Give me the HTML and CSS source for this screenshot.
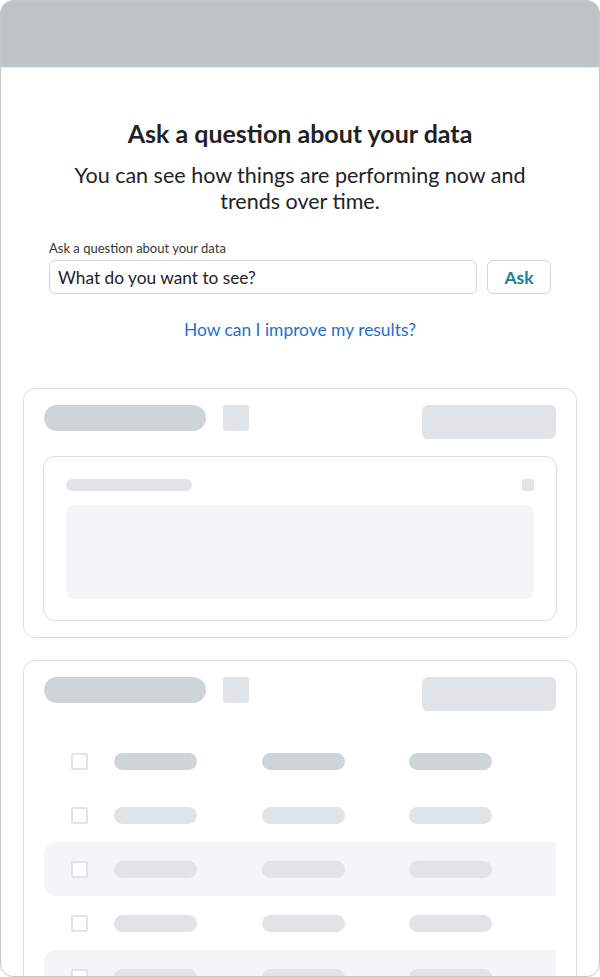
FILE: index.html
```html
<!DOCTYPE html>
<html lang="en">
<head>
<meta charset="utf-8">
<title>Ask a question about your data</title>
<link rel="stylesheet" href="styles.css">
</head>
<body>
<div class="frame">
  <div class="topbar"></div>
  <main class="main">
    <h1 class="title">Ask a question about your data</h1>
    <p class="subtitle">You can see how things are performing now and trends over time.</p>
    <form class="ask-form">
      <label class="label" for="q">Ask a question about your data</label>
      <div class="ask-row">
        <input id="q" class="input" type="text" placeholder="What do you want to see?">
        <button type="button" class="ask-btn">Ask</button>
      </div>
    </form>
    <a class="help-link" href="#">How can I improve my results?</a>

    <section class="card">
      <div class="card-head">
        <span class="sk-title"></span>
        <span class="sk-icon"></span>
        <span class="spacer"></span>
        <span class="sk-action"></span>
      </div>
      <div class="inner-card">
        <div class="inner-head">
          <span class="sk-line"></span>
          <span class="sk-dot"></span>
        </div>
        <div class="sk-chart"></div>
      </div>
    </section>

    <section class="card card-table">
      <div class="card-head">
        <span class="sk-title"></span>
        <span class="sk-icon"></span>
        <span class="spacer"></span>
        <span class="sk-action"></span>
      </div>
      <div class="table">
        <div class="row head"><span class="cb"></span><span class="cell"></span><span class="cell"></span><span class="cell"></span></div>
        <div class="row"><span class="cb"></span><span class="cell"></span><span class="cell"></span><span class="cell"></span></div>
        <div class="row striped"><span class="cb"></span><span class="cell"></span><span class="cell"></span><span class="cell"></span></div>
        <div class="row"><span class="cb"></span><span class="cell"></span><span class="cell"></span><span class="cell"></span></div>
        <div class="row striped"><span class="cb"></span><span class="cell"></span><span class="cell"></span><span class="cell"></span></div>
      </div>
    </section>
  </main>
</div>
</body>
</html>
```

FILE: styles.css
```css
* { box-sizing: border-box; }
html, body { margin: 0; padding: 0; background: #ffffff; }
body { font-family: Lato, "Open Sans", Arial, sans-serif; color: #1e2226; }

.frame {
  width: 600px;
  height: 977px;
  border: 1px solid #c3c7c9;
  border-radius: 13px;
  overflow: hidden;
  background: #fff;
}
.topbar {
  height: 67px;
  background: #bdc3c6;
  border-bottom: 1px solid #e6e8ea;
}
.main {
  padding: 50px 22px 0;
  display: flex;
  flex-direction: column;
  align-items: stretch;
}
.title {
  margin: 0;
  font-size: 25px;
  line-height: 30px;
  font-weight: 700;
  text-align: center;
  color: #1e2226;
}
.subtitle {
  margin: 14px auto 0;
  max-width: 480px;
  font-size: 21.5px;
  line-height: 26px;
  text-align: center;
  color: #1e2226;
}
.ask-form {
  width: 502px;
  margin: 26px auto 0;
  display: flex;
  flex-direction: column;
}
.label {
  font-size: 13px;
  line-height: 16px;
  color: #33383c;
  margin-bottom: 4px;
}
.ask-row {
  display: flex;
  gap: 10px;
}
.input {
  flex: 1;
  height: 34px;
  border: 1px solid #d3d7d9;
  border-radius: 6px;
  padding: 0 8px;
  font-family: inherit;
  font-size: 17.3px;
  color: #1e2226;
  outline: none;
}
.input::placeholder { color: #1e2226; opacity: 1; }
.ask-btn {
  width: 64px;
  height: 34px;
  border: 1px solid #d3d7d9;
  border-radius: 6px;
  background: #fff;
  font-family: inherit;
  font-size: 17.5px;
  font-weight: 700;
  color: #177f9b;
  padding: 0;
}
.help-link {
  margin: 25px auto 0;
  font-size: 17.4px;
  line-height: 22px;
  color: #1f6fd1;
  text-decoration: none;
}

.card {
  margin-top: 47px;
  border: 1px solid #dcdee2;
  border-radius: 12px;
  padding: 16px 20px 16px;
}
.card-table {
  margin-top: 22px;
  padding-bottom: 0;
}
.card-head {
  display: flex;
  align-items: flex-start;
}
.sk-title {
  width: 162px;
  height: 26px;
  border-radius: 13px;
  background: #cfd4d6;
}
.sk-icon {
  width: 26px;
  height: 26px;
  margin-left: 17px;
  border-radius: 2px;
  background: #e1e4e6;
}
.spacer { flex: 1; }
.sk-action {
  width: 134px;
  height: 34px;
  border-radius: 6px;
  background: #e1e4e6;
}
.inner-card {
  margin: 17px -1px 0;
  border: 1px solid #dcdee2;
  border-radius: 12px;
  padding: 22px 22px 21px;
}
.inner-head {
  display: flex;
  justify-content: space-between;
}
.sk-line {
  width: 126px;
  height: 12px;
  border-radius: 6px;
  background: #e1e4e6;
}
.sk-dot {
  width: 12px;
  height: 12px;
  border-radius: 3px;
  background: #e1e4e6;
}
.sk-chart {
  margin-top: 14px;
  height: 94px;
  border-radius: 8px;
  background: #f4f5f7;
}

.table {
  margin-top: 23px;
  display: flex;
  flex-direction: column;
}
.row {
  height: 54px;
  display: flex;
  align-items: center;
  padding-left: 27px;
  gap: 64.5px;
}
.row.striped {
  background: #f4f5f7;
  border-radius: 12px 0 0 12px;
}
.cb {
  width: 17px;
  height: 17px;
  border: 2px solid #e1e4e6;
  border-radius: 2px;
  background: #fff;
  margin-right: -38.5px;
}
.cell {
  width: 83px;
  height: 17px;
  border-radius: 9px;
  background: #e1e4e6;
}
.row.head .cell { background: #cfd4d6; }
```
